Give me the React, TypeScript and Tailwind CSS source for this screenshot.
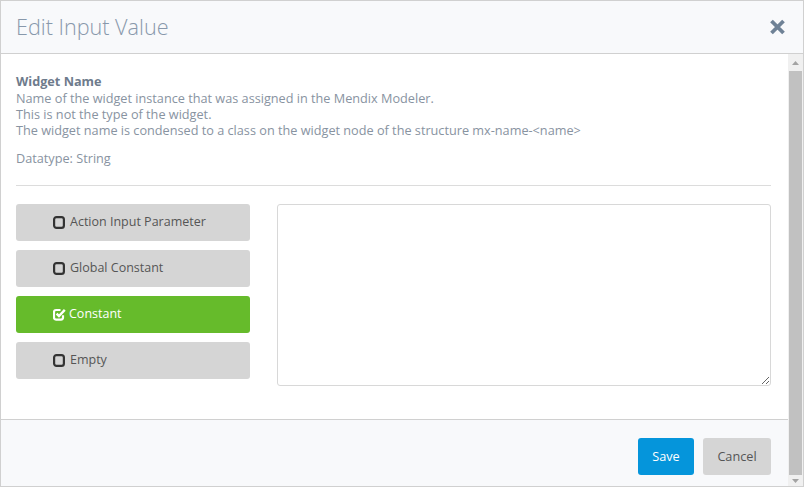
import React from "react";

const font = { fontFamily: '"Open Sans", "Noto Sans", sans-serif' };

function SquareIcon() {
	return (
		<svg width="12" height="13" viewBox="0 0 12 13" className="mr-[5px] shrink-0">
			<rect x="1.1" y="1.1" width="9.8" height="10.8" rx="2.4" fill="none" stroke="#333" strokeWidth="2.2" />
		</svg>
	);
}

function CheckIcon() {
	return (
		<svg width="13" height="13" viewBox="0 0 13 13" className="mr-[3px] shrink-0">
			<path d="M10 7.2V9.6a2 2 0 0 1-2 2H3a2 2 0 0 1-2-2V4a2 2 0 0 1 2-2h4.5" fill="none" stroke="#fff" strokeWidth="2.2" />
			<path d="M3.6 5.6l2.4 2.5 5.8-6.2" fill="none" stroke="#fff" strokeWidth="2.4" />
		</svg>
	);
}

function Option({ label, active }: { label: string; active?: boolean }) {
	return (
		<button
			className={
				active
					? "flex h-[37px] w-full items-center rounded-[3px] bg-[#66bb2b] pl-[37px] text-[12.5px] text-white"
					: "flex h-[37px] w-full items-center rounded-[3px] bg-[#d5d5d5] pl-[37px] text-[12.5px] text-[#555]"
			}
		>
			{active ? <CheckIcon /> : <SquareIcon />}
			<span>{label}</span>
		</button>
	);
}

export default function App() {
	return (
		<div style={font} className="flex h-[487px] w-[804px] flex-col border border-[#d0d0d0] bg-white">
			{/* header */}
			<div className="flex h-[53px] shrink-0 items-center justify-between border-b border-[#d0d0d0] bg-[#f8f9fb] pl-[15px] pr-[17px]">
				<h1 className="text-[21.6px] font-light text-[#8898ab]">Edit Input Value</h1>
				<svg width="17" height="16" viewBox="0 0 17 16">
					<path d="M2.5 2L14.5 14M14.5 2L2.5 14" stroke="#6f8296" strokeWidth="3.8" />
				</svg>
			</div>

			<div className="flex min-h-0 flex-1">
				<div className="flex flex-1 flex-col">
					{/* body */}
					<div className="flex-1 pl-[15px] pr-[17px] pt-[19px]">
						<div className="text-[12.7px] leading-[16px] text-[#8893a1]">
							<div className="mb-[1px] font-bold text-[#6e7b8c]">Widget Name</div>
							<div>Name of the widget instance that was assigned in the Mendix Modeler.</div>
							<div>This is not the type of the widget.</div>
							<div>The widget name is condensed to a class on the widget node of the structure mx-name-&lt;name&gt;</div>
						</div>
						<div className="mt-[12px] text-[12.7px] leading-[16px] text-[#8893a1]">Datatype: String</div>
						<hr className="mt-[19px] border-[#dcdcdc]" />
						<div className="mt-[18px] flex gap-[27px]">
							<div className="flex w-[234px] shrink-0 flex-col gap-[9px]">
								<Option label="Action Input Parameter" />
								<Option label="Global Constant" />
								<Option label="Constant" active />
								<Option label="Empty" />
							</div>
							<textarea className="h-[182px] flex-1 resize-y rounded-[3px] border border-[#d8d8d8] bg-white" />
						</div>
					</div>

					{/* footer */}
					<div className="flex h-[67px] shrink-0 justify-end gap-[9px] border-t border-[#d0d0d0] bg-[#f8f9fb] pl-[16px] pr-[17px] pt-[18px]">
						<button className="h-[37px] w-[56px] rounded-[3px] bg-[#0595db] text-[12.7px] text-white">Save</button>
						<button className="h-[37px] w-[68px] rounded-[3px] bg-[#d5d5d5] text-[12.7px] text-[#555]">Cancel</button>
					</div>
				</div>

				{/* scrollbar */}
				<div className="flex w-[15px] shrink-0 flex-col bg-[#f0f0f0]">
					<div className="flex h-[17px] items-center justify-center">
						<svg width="7" height="4" viewBox="0 0 7 4"><path d="M0 4L3.5 0L7 4Z" fill="#a3a3a3" /></svg>
					</div>
					<div className="mx-[1px] flex-1 bg-[#c1c1c1]" />
					<div className="flex h-[11px] items-center justify-center">
						<svg width="7" height="4" viewBox="0 0 7 4"><path d="M0 0L3.5 4L7 0Z" fill="#a3a3a3" /></svg>
					</div>
				</div>
			</div>
		</div>
	);
}
